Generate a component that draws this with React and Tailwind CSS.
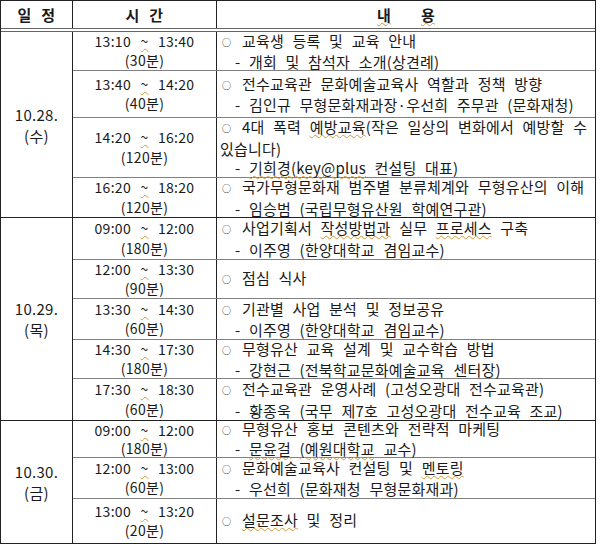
const U = ({ children }) => (
  <span className="underline decoration-wavy decoration-[#d49a3a] decoration-1 underline-offset-[1px]">
    {children}
  </span>
);

const schedule = [
  {
    date: '10.28.',
    day: '(수)',
    rows: [
      { h: 'h-[39px]', from: '13:10', to: '13:40', dur: '(30분)', b: '교육생 등록 및 교육 안내', d: '개회 및 참석자 소개(상견례)' },
      { h: 'h-[47px]', from: '13:40', to: '14:20', dur: '(40분)', b: '전수교육관 문화예술교육사 역할과 정책 방향', d: '김인규 무형문화재과장·우선희 주무관 (문화재청)' },
      {
        h: 'h-[60px]',
        from: '14:20',
        to: '16:20',
        dur: '(120분)',
        b: (
          <>
            4대 폭력 <U>예방교육</U>(작은 일상의 변화에서 예방할 수
          </>
        ),
        cont: '있습니다)',
        d: (
          <>
            <U>기희경(key@plus</U> 컨설팅 대표)
          </>
        ),
      },
      { h: 'h-[39px]', from: '16:20', to: '18:20', dur: '(120분)', b: '국가무형문화재 범주별 분류체계와 무형유산의 이해', d: '임승범 (국립무형유산원 학예연구관)' },
    ],
  },
  {
    date: '10.29.',
    day: '(목)',
    rows: [
      {
        h: 'h-[42px]',
        from: '09:00',
        to: '12:00',
        dur: '(180분)',
        b: (
          <>
            사업기획서 <U>작성방법과</U> 실무 <U>프로세스</U> 구축
          </>
        ),
        d: '이주영 (한양대학교 겸임교수)',
      },
      { h: 'h-[39px]', from: '12:00', to: '13:30', dur: '(90분)', b: '점심 식사' },
      { h: 'h-[41px]', from: '13:30', to: '14:30', dur: '(60분)', b: '기관별 사업 분석 및 정보공유', d: '이주영 (한양대학교 겸임교수)' },
      { h: 'h-[39px] leading-[19px]', from: '14:30', to: '17:30', dur: '(180분)', b: '무형유산 교육 설계 및 교수학습 방법', d: '강현근 (전북학교문화예술교육 센터장)' },
      { h: 'h-[41px]', from: '17:30', to: '18:30', dur: '(60분)', b: '전수교육관 운영사례 (고성오광대 전수교육관)', d: '황종욱 (국무 제7호 고성오광대 전수교육 조교)' },
    ],
  },
  {
    date: '10.30.',
    day: '(금)',
    rows: [
      {
        h: 'h-[37px] leading-[18px]',
        from: '09:00',
        to: '12:00',
        dur: '(180분)',
        b: '무형유산 홍보 콘텐츠와 전략적 마케팅',
        d: (
          <>
            <U>문윤걸</U> <U>(예원대학교</U> 교수)
          </>
        ),
      },
      {
        h: 'h-[41px]',
        from: '12:00',
        to: '13:00',
        dur: '(60분)',
        b: (
          <>
            문화예술교육사 컨설팅 및 <U>멘토링</U>
          </>
        ),
        d: '우선희 (문화재청 무형문화재과)',
      },
      {
        h: 'h-[44px]',
        from: '13:00',
        to: '13:20',
        dur: '(20분)',
        b: (
          <>
            <U>설문조사</U> 및 정리
          </>
        ),
      },
    ],
  },
];

const Row = ({ row, last }) => (
  <div className={`flex ${row.h} ${last ? '' : 'border-b border-[#808080]'}`}>
    <div className="w-[144px] shrink-0 border-r border-[#222] flex flex-col items-center justify-center">
      <div>
        {row.from} <U>~</U> {row.to}
      </div>
      <div>{row.dur}</div>
    </div>
    <div className="flex-1 flex flex-col justify-center pl-[3px] whitespace-nowrap text-[15px] tracking-[0.2px] [word-spacing:5px]">
      <div>
        <span className="inline-block w-[22px] pl-[2px] text-[9px] align-[1px]">○</span>
        {row.b}
      </div>
      {row.cont && <div>{row.cont}</div>}
      {row.d && (
        <div>
          <span className="inline-block w-[29px] pl-[15px]">-</span>
          {row.d}
        </div>
      )}
    </div>
  </div>
);

const App = () => {
  return (
    <div className="w-[600px] h-[544px] bg-white">
      <div
        className="w-[596px] border border-[#222] text-[14px] leading-[19.5px] tracking-[0.3px] [word-spacing:6px] text-[#1a1a1a]"
        style={{ fontFamily: '"Noto Sans CJK KR", "Noto Sans", sans-serif' }}
      >
        <div className="flex h-[31px] border-b-[4px] border-double border-[#666] font-bold text-[15px]">
          <div className="w-[72px] shrink-0 border-r border-[#222] flex items-center justify-center">일 정</div>
          <div className="w-[144px] shrink-0 border-r border-[#222] flex items-center justify-center">시 간</div>
          <div className="flex-1 flex items-center justify-center">
            <U>
              내<span className="inline-block w-[30px]"></span>용
            </U>
          </div>
        </div>
        {schedule.map((g, gi) => (
          <div key={gi} className={`flex ${gi < schedule.length - 1 ? 'border-b border-[#222]' : ''}`}>
            <div className="w-[72px] shrink-0 border-r border-[#222] flex flex-col items-center justify-center leading-[21px] text-[15px]">
              <div>{g.date}</div>
              <div>{g.day}</div>
            </div>
            <div className="flex-1 flex flex-col">
              {g.rows.map((r, ri) => (
                <Row key={ri} row={r} last={ri === g.rows.length - 1} />
              ))}
            </div>
          </div>
        ))}
      </div>
    </div>
  );
};

export default App;
